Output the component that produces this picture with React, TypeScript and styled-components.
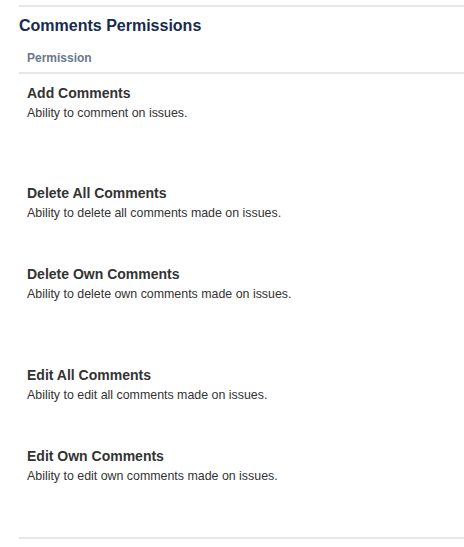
import { createGlobalStyle } from "styled-components";
import styled from "styled-components";

const GlobalStyle = createGlobalStyle`
  body {
    margin: 0;
    background: #ffffff;
    font-family: "Liberation Sans", Arial, sans-serif;
  }
`;

const Page = styled.div`
  padding: 5px 0 0 19px;
`;

const Rule = styled.div`
  height: 2px;
  background: #e6e7ea;
`;

const Title = styled.h2`
  margin: 9px 0 6px;
  font-size: 16px;
  line-height: 20px;
  font-weight: 700;
  color: #172b4d;
`;

const Table = styled.table`
  width: 100%;
  border-collapse: collapse;
`;

const HeadCell = styled.th`
  text-align: left;
  padding: 8px 8px 6px;
  font-size: 12px;
  line-height: 16px;
  font-weight: 700;
  color: #6b778c;
  border-bottom: 2px solid #e6e7ea;
`;

const Row = styled.tr<{ $h: number }>`
  height: ${(p) => p.$h}px;
`;

const Cell = styled.td`
  vertical-align: top;
  padding: 9px 8px 10px;
`;

const Name = styled.div`
  font-size: 14px;
  line-height: 20px;
  font-weight: 700;
  color: #333333;
`;

const Desc = styled.div`
  font-size: 12.4px;
  line-height: 16px;
  color: #333333;
  margin-top: 2px;
`;

const permissions = [
  { name: "Add Comments", desc: "Ability to comment on issues.", h: 101 },
  { name: "Delete All Comments", desc: "Ability to delete all comments made on issues.", h: 81 },
  { name: "Delete Own Comments", desc: "Ability to delete own comments made on issues.", h: 101 },
  { name: "Edit All Comments", desc: "Ability to edit all comments made on issues.", h: 81 },
  { name: "Edit Own Comments", desc: "Ability to edit own comments made on issues.", h: 100 },
];

export default function App() {
  return (
    <Page>
      <GlobalStyle />
      <Rule />
      <Title>Comments Permissions</Title>
      <Table>
        <thead>
          <tr>
            <HeadCell>Permission</HeadCell>
          </tr>
        </thead>
        <tbody>
          {permissions.map((p) => (
            <Row key={p.name} $h={p.h}>
              <Cell>
                <Name>{p.name}</Name>
                <Desc>{p.desc}</Desc>
              </Cell>
            </Row>
          ))}
        </tbody>
      </Table>
      <Rule />
    </Page>
  );
}
